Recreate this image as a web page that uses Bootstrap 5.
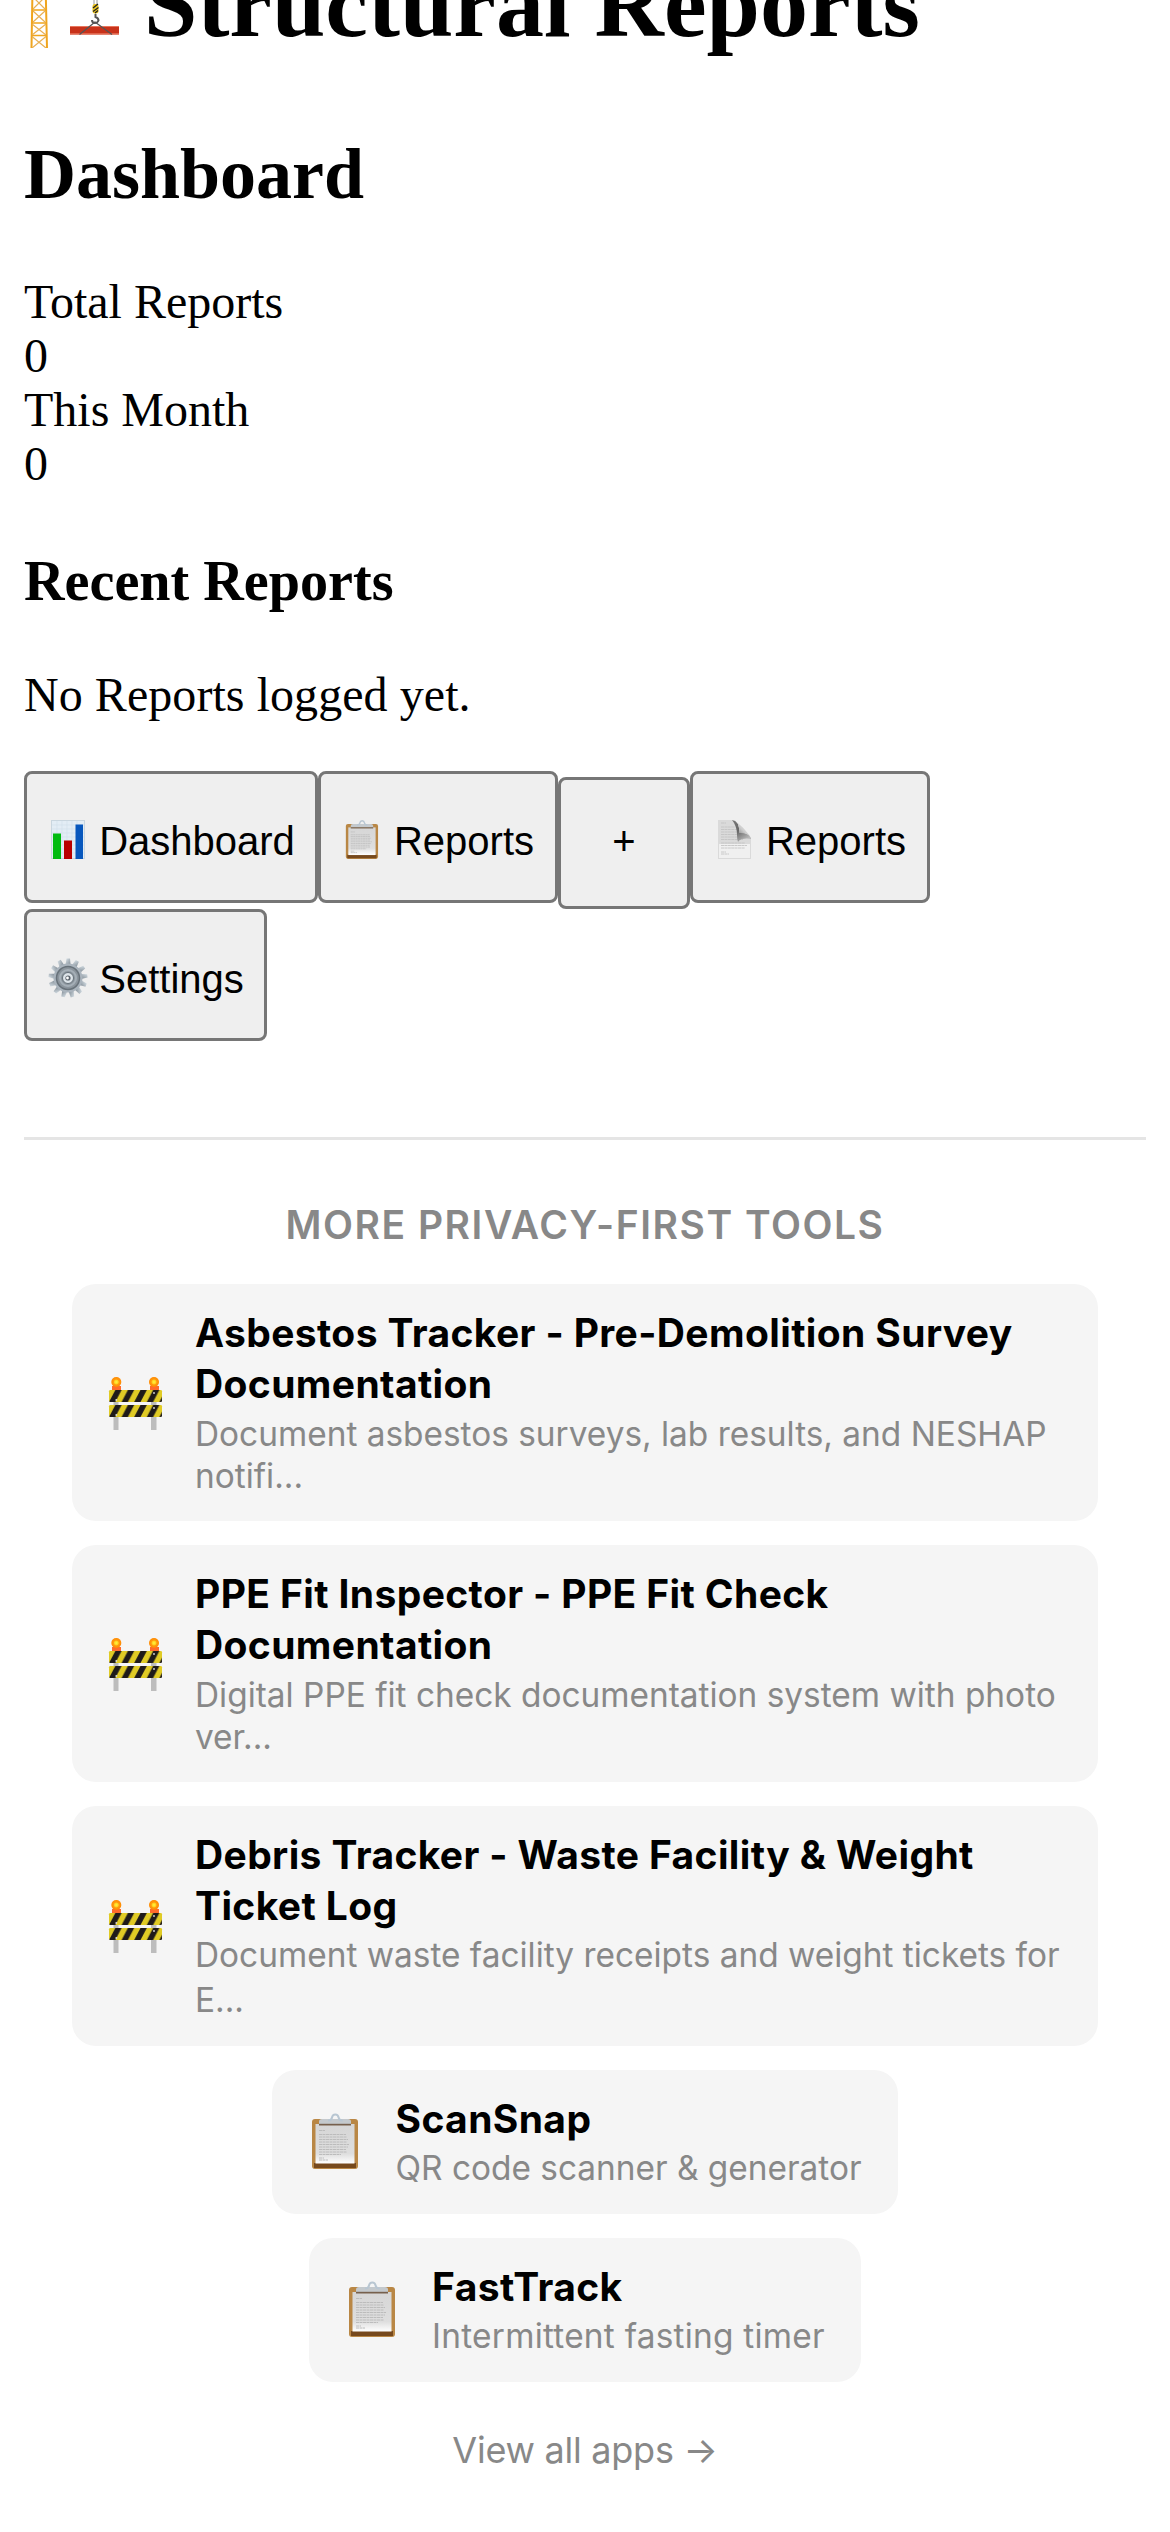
<!DOCTYPE html>
<html lang="en">
<head>
<meta charset="utf-8">
<meta name="viewport" content="width=device-width, initial-scale=1">
<title>Structural Reports</title>
<link href="https://cdn.jsdelivr.net/npm/bootstrap@5.3.0/dist/css/bootstrap.min.css" rel="stylesheet">
<style>
body{font-family:"Liberation Serif",serif;font-size:48px;line-height:54px;color:#000;background:#fff}
.page{padding:0 24px;height:2532px}
.page h1,.page h2,.page h3{font-weight:700;color:#000}
.page h1{font-size:96px;line-height:108px;margin:-50px 0 76px;gap:24px}
.page h2{font-size:72px;line-height:81px;margin:0 0 60px}
.page h3{font-size:56.16px;line-height:63px;margin:59px 0 55px}
.crane{width:96px;height:96px;margin-top:2px}
.empty-note{margin:0 0 49px;letter-spacing:.06px}
.tab-btn{height:132px;border:3px solid #767676;border-radius:8px;background:#efefef;font:40px/46px "Liberation Sans",Arial,sans-serif;color:#000;padding:8px 0 0;white-space:nowrap;gap:10px}
.tab-btn svg{width:42px;height:42px;margin-top:-3px}
.w-dash{width:294px}.w-rep{width:240px}.w-set{width:243px}
.w-plus{width:132px;margin-top:6px;padding-top:0;padding-bottom:4px}
.tools{font-family:Inter,sans-serif;border-top:3px solid #e5e5e5;margin-top:96px;padding-top:61px}
.tools-title{font-size:39px;line-height:48px;font-weight:600;color:#888;margin-bottom:35px;letter-spacing:1.52px}
.tool-list{gap:24px;padding:0 48px}
.tool{background:#f5f5f5;border-radius:24px;padding:24px 36px;gap:30px;color:#000;white-space:nowrap}
.tool svg{width:57px;height:60px}
.tool-name{font-size:39px;line-height:51px;font-weight:700;letter-spacing:.38px;margin:-1px 0 1px}
.tool-desc{font-size:33.4px;line-height:45px;color:#888;padding-top:1px;margin-bottom:-1px}
.tight{line-height:42px;padding-top:3px;margin-bottom:0}
.airy{letter-spacing:.24px}
.all-link{font-size:36px;line-height:48px;color:#888;margin-top:44px;letter-spacing:-.25px}
</style>
<script src="https://cdn.jsdelivr.net/npm/bootstrap@5.3.0/dist/js/bootstrap.bundle.min.js"></script>
</head>
<body>
<svg width="0" height="0" class="position-absolute" aria-hidden="true">
<defs>
<linearGradient id="paper" x1="0" y1="0" x2="0" y2="1"><stop offset="0" stop-color="#d6d6d6"/><stop offset=".75" stop-color="#dedede"/><stop offset="1" stop-color="#fff"/></linearGradient>
<linearGradient id="steel" x1="0" y1="0" x2="1" y2="1"><stop offset="0" stop-color="#dbe4ea"/><stop offset="1" stop-color="#7f8a93"/></linearGradient>
<linearGradient id="curl" x1="0" y1="1" x2="1" y2="0"><stop offset="0" stop-color="#666"/><stop offset=".45" stop-color="#ccc"/><stop offset="1" stop-color="#fff"/></linearGradient>
<linearGradient id="shade" x1="0" y1="0" x2=".6" y2="1"><stop offset="0" stop-color="#777"/><stop offset=".5" stop-color="#666"/><stop offset="1" stop-color="#bbb"/></linearGradient>
<radialGradient id="lamp"><stop offset="0" stop-color="#fff34a"/><stop offset=".4" stop-color="#ffd21c"/><stop offset=".55" stop-color="#ff9a10"/><stop offset="1" stop-color="#ff8a00"/></radialGradient>
<pattern id="hazard" width="12.6" height="12" patternUnits="userSpaceOnUse"><path fill="#e0cb25" d="M0 0h13v12H0z"/><path fill="#1e1a1a" d="M6.300 0h6.300L6.300 12H0z"/></pattern>
<symbol id="i-barrier" viewBox="0 0 57 60"><path fill="#bdbdbd" d="M5.500 18h5v39h-5zM43 18h5.500v39H43z"/><path fill="#ff6a2c" d="M4 13h9v5H4zM42 13h9v5h-9z"/><circle cx="8.300" cy="9" r="5" fill="url(#lamp)"/><circle cx="46" cy="9" r="5" fill="url(#lamp)"/><g transform="translate(1 17)"><rect width="53" height="12" rx="1.200" fill="url(#hazard)"/></g><g transform="translate(1 32)"><rect width="53" height="12" rx="1.200" fill="url(#hazard)"/></g><g fill="#ddd"><circle cx="8.300" cy="27" r=".9"/><circle cx="46" cy="20" r=".9"/><circle cx="8.300" cy="42" r=".9"/><circle cx="46" cy="35" r=".9"/></g></symbol>
<symbol id="i-clip" viewBox="0 0 57 60"><rect x="4" y="7" width="46" height="50" rx="3" fill="#b98745"/><path fill="#76491d" d="M6 51h42v5H6z"/><path fill="url(#paper)" d="M7.500 12h39v39.500h-39z"/><path stroke="#bcbcbc" stroke-width="1" stroke-dasharray="3 .5" d="M11 18.500h6M11 22.500h27M11 25h28M11 27.500h29M11 30h28M11 32.500h30M11 35h29M11 37.500h27M11 40h28M11 42.500h22M11 46h5M11 48h9"/><path fill="#c4c9cd" d="M11 12V9.500q0-2.500 3-2.500h26q3 0 3 2.500V12z"/><path fill="#76604d" d="M11 11.800h32v1.700H11z"/><path fill="none" stroke="#b8c6d2" stroke-width="2" d="M20 8.500q3.500 0 4-3 .5-3 3.300-3t3.300 3q.5 3 4 3"/></symbol>
<symbol id="i-chart" viewBox="0 0 42 42"><path fill="#c9d6df" d="M4 1h34v39H4z"/><path fill="#e3edf5" d="M5 2h32v37H5z"/><path stroke="#d1dfe9" stroke-width=".6" d="M5 6h32M5 10h32M5 14h32M5 18h32M5 22h32M5 26h32M5 30h32M5 34h32M10 2v37M15 2v37M20 2v37M25 2v37M30 2v37"/><path fill="#0b1" d="M6 14.500h8V40H6z"/><path fill="#b90000" d="M17 21.500h8V40h-8z"/><path fill="#0757bd" d="M28.500 5.500h7.500V40h-7.500z"/></symbol>
<symbol id="i-page" viewBox="0 0 42 42"><path fill="#dadada" d="M4 1h17q4 8 4 15 6-1 12 3v21H4z"/><path fill="#f0f0f0" d="M5 25h31v14H5z"/><path stroke="#c4c4c4" stroke-width=".9" stroke-dasharray="3 .4" d="M7 4h5M7 8h15M7 10.500h16M7 13h16M7 15.500h16M7 18h18M7 20.500h22M7 24h24M7 26.500h26M7 29h24M7 33h5M7 35h8"/><path fill="url(#shade)" d="M18 1q8 1 7 13 9-1 12 5v1q-4-1-9 0-3 1-4 3-1-3-1-7 0-9-5-15z"/><path fill="url(#curl)" d="M21 1.500q9 7 15.500 16-4-4-11.500-3.500 1-9-4-12.500z"/></symbol>
<symbol id="i-gear" viewBox="0 0 42 42"><g fill="url(#steel)"><path id="tooth" d="M18.500 8l1-6.500h3.500l.6 6.500z"/><use href="#tooth" transform="rotate(27.700 21 21)"/><use href="#tooth" transform="rotate(55.400 21 21)"/><use href="#tooth" transform="rotate(83 21 21)"/><use href="#tooth" transform="rotate(110.800 21 21)"/><use href="#tooth" transform="rotate(138.500 21 21)"/><use href="#tooth" transform="rotate(166 21 21)"/><use href="#tooth" transform="rotate(194 21 21)"/><use href="#tooth" transform="rotate(221.500 21 21)"/><use href="#tooth" transform="rotate(249 21 21)"/><use href="#tooth" transform="rotate(277 21 21)"/><use href="#tooth" transform="rotate(304.600 21 21)"/><use href="#tooth" transform="rotate(332.300 21 21)"/></g><circle cx="21" cy="21" r="14.500" fill="#aab4bd"/><circle cx="21" cy="21" r="11.500" fill="#8b949c" stroke="#68727a" stroke-width="1.500"/><circle cx="21" cy="21" r="8" fill="none" stroke="#a5afb7" stroke-width="2"/><circle cx="21" cy="21" r="5.500" fill="#dde4e9" stroke="#66717a"/><circle cx="21" cy="21" r="2.600" fill="#59616a"/><circle cx="20.500" cy="21" r="1.400" fill="#fff"/></symbol>
</defs>
</svg>
<main class="page overflow-hidden">
<h1 class="d-flex align-items-start text-nowrap"><svg class="crane flex-shrink-0" viewBox="24 -48 96 96" aria-label="crane"><g fill="none" stroke="#f0a51e"><path stroke-width="2" d="M33-40L31.500 48M45-40L47 48"/><path stroke-width="1.600" d="M33-4h12M33 10h13M32 23h14M32 35.500h15"/><path stroke="#e8b054" stroke-width="1.200" d="M33-3l12 12M45-3L33 9M33 11l12 11M45 11L33 22M32 24l14 11M46 24L32 35M32 36.500L46 48M46 36.500L32 48"/></g><path stroke="#999" stroke-width="1" d="M94-40V5M97-40V5"/><rect x="92.500" y="4" width="6" height="9.500" rx="2.500" fill="#ecc51c"/><path stroke="#222" stroke-width="1.300" d="M93 8l5-4M93 11.500l5.500-4M95 13l3-2.500"/><path fill="none" stroke="#555" stroke-width="2" d="M95.500 14v3q3 1 3 3.500-1 2.500-3.500 2.500-3 0-3-3"/><path fill="#c8321a" d="M70 26h49v8.500H70z"/><path stroke="#e8755c" stroke-width="1.200" d="M70 26.500h49M70 33.800h49"/><path fill="none" stroke="#555" stroke-width="1.300" d="M79.500 34.500L95 22l17 12.500"/></svg><span>Structural Reports</span></h1>
<h2>Dashboard</h2>
<div>Total Reports</div>
<div>0</div>
<div>This Month</div>
<div>0</div>
<h3>Recent Reports</h3>
<p class="empty-note">No Reports logged yet.</p>
<nav class="d-flex flex-wrap align-items-start">
<button class="tab-btn w-dash d-flex align-items-center justify-content-center"><svg><use href="#i-chart"/></svg>Dashboard</button>
<button class="tab-btn w-rep d-flex align-items-center justify-content-center"><svg><use href="#i-clip"/></svg>Reports</button>
<button class="tab-btn w-plus d-flex align-items-center justify-content-center">+</button>
<button class="tab-btn w-rep d-flex align-items-center justify-content-center"><svg><use href="#i-page"/></svg>Reports</button>
<button class="tab-btn w-set d-flex align-items-center justify-content-center"><svg><use href="#i-gear"/></svg>Settings</button>
</nav>
<footer class="tools text-center">
<div class="tools-title">MORE PRIVACY-FIRST TOOLS</div>
<div class="tool-list d-flex flex-column align-items-center">
<a class="tool w-100 d-flex align-items-center text-start text-decoration-none"><svg class="flex-shrink-0"><use href="#i-barrier"/></svg><div><div class="tool-name">Asbestos Tracker - Pre-Demolition Survey<br>Documentation</div><div class="tool-desc tight">Document asbestos surveys, lab results, and NESHAP<br>notifi...</div></div></a>
<a class="tool w-100 d-flex align-items-center text-start text-decoration-none"><svg class="flex-shrink-0"><use href="#i-barrier"/></svg><div><div class="tool-name">PPE Fit Inspector - PPE Fit Check<br>Documentation</div><div class="tool-desc tight">Digital PPE fit check documentation system with photo<br>ver...</div></div></a>
<a class="tool w-100 d-flex align-items-center text-start text-decoration-none"><svg class="flex-shrink-0"><use href="#i-barrier"/></svg><div><div class="tool-name">Debris Tracker - Waste Facility &amp; Weight<br>Ticket Log</div><div class="tool-desc">Document waste facility receipts and weight tickets for<br>E...</div></div></a>
<a class="tool d-flex align-items-center text-start text-decoration-none"><svg class="flex-shrink-0"><use href="#i-clip"/></svg><div><div class="tool-name">ScanSnap</div><div class="tool-desc">QR code scanner &amp; generator</div></div></a>
<a class="tool d-flex align-items-center text-start text-decoration-none"><svg class="flex-shrink-0"><use href="#i-clip"/></svg><div><div class="tool-name">FastTrack</div><div class="tool-desc airy">Intermittent fasting timer</div></div></a>
</div>
<div class="all-link">View all apps →</div>
</footer>
</main>
</body>
</html>
